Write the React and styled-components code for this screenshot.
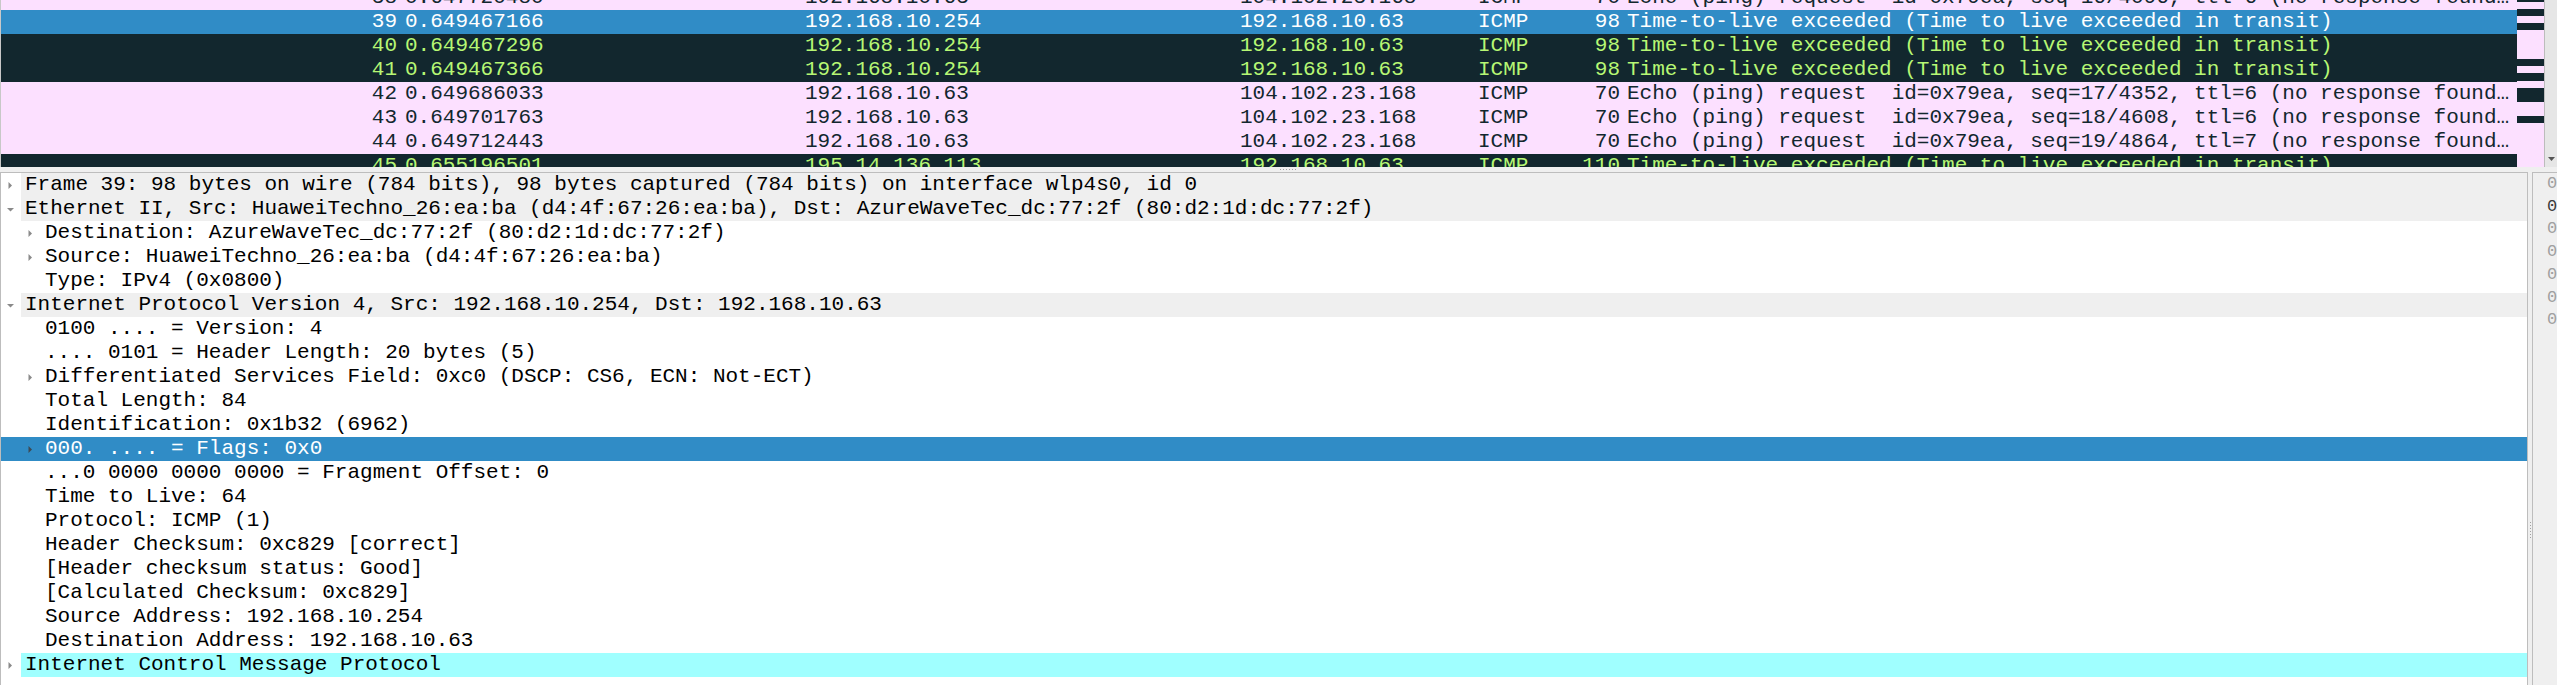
import React from "react";
import styled, { createGlobalStyle } from "styled-components";

const GlobalStyle = createGlobalStyle`
  html, body {
    margin: 0;
    padding: 0;
    background: #efefef;
  }
  body {
    overflow: hidden;
  }
  *, *:before, *:after {
    box-sizing: border-box;
  }
`;

const Window = styled.div`
  width: 2557px;
  height: 685px;
  display: flex;
  flex-direction: column;
  background: #efefef;
  font-family: "Liberation Mono", monospace;
  font-size: 21px;
  overflow: hidden;
`;

// ---- packet list ----

const PacketPane = styled.div`
  display: flex;
  height: 167px;
  flex-shrink: 0;
`;

const PacketList = styled.div`
  width: 2517px;
  flex-shrink: 0;
  overflow: hidden;
  border-left: 1px solid #c8c8c8;
`;

const PacketRows = styled.div`
  margin-top: -14px;
`;

const rowColors = {
  icmp: { bg: "#fce0ff", fg: "#12272e" },
  error: { bg: "#12272e", fg: "#b7f774" },
  selected: { bg: "#308cc6", fg: "#ffffff" }
};

const PacketRow = styled.div`
  display: flex;
  height: 24px;
  line-height: 24px;
  background: ${props => rowColors[props.$kind].bg};
  color: ${props => rowColors[props.$kind].fg};
`;

const Cell = styled.div`
  flex: 0 0 ${props => props.$w}px;
  padding: 0 4px;
  text-align: ${props => (props.$right ? "right" : "left")};
  white-space: pre;
  overflow: hidden;
`;

const InfoCell = styled.div`
  flex: 1;
  min-width: 0;
  padding: 0 4px 0 3px;
  white-space: pre;
  overflow: hidden;
  text-overflow: ellipsis;
`;

const Minimap = styled.svg`
  display: block;
  flex-shrink: 0;
  width: 28px;
  height: 167px;
  border-right: 1px solid #bcbcbc;
`;

const ScrollTrack = styled.div`
  flex: 1;
  background: #e6e6e6;
  display: flex;
  flex-direction: column;
  justify-content: flex-end;
  align-items: center;
  padding-bottom: 5px;
`;

const HSplitter = styled.div`
  height: 5px;
  flex-shrink: 0;
  display: flex;
  justify-content: center;
  align-items: center;
  padding-left: 20px;
`;

const HDots = styled.div`
  width: 17px;
  height: 1px;
  background: repeating-linear-gradient(to right, #a0a0a0 0 1px, transparent 1px 3px);
`;

// ---- lower panes ----

const Lower = styled.div`
  flex: 1;
  display: flex;
  min-height: 0;
`;

const Tree = styled.div`
  width: 2528px;
  flex-shrink: 0;
  background: #ffffff;
  border: 1px solid #bdbdbd;
  border-bottom: none;
  color: #000000;
  overflow: hidden;
`;

const TreeRow = styled.div`
  display: flex;
  height: 24px;
  line-height: 24px;
  background: ${props => (props.$selected ? "#308cc6" : "transparent")};
  color: ${props => (props.$selected ? "#ffffff" : "#000000")};
`;

const Branch = styled.div`
  flex-shrink: 0;
  display: flex;
  padding-left: ${props => props.$depth * 20}px;
`;

const BranchSlot = styled.div`
  width: 20px;
  padding-right: 2px;
  display: flex;
  align-items: center;
  justify-content: center;
`;

const itemTones = {
  top: "#efefef",
  icmp: "#a0ffff",
  none: "transparent"
};

const Item = styled.div`
  flex: 1;
  padding-left: 4px;
  white-space: pre;
  overflow: hidden;
  background: ${props => itemTones[props.$tone]};
`;

const VSplitter = styled.div`
  width: 4px;
  flex-shrink: 0;
  display: flex;
  justify-content: center;
  padding-top: 350px;
`;

const VDots = styled.div`
  width: 1px;
  height: 17px;
  background: repeating-linear-gradient(to bottom, #a0a0a0 0 1px, transparent 1px 3px);
`;

const Bytes = styled.div`
  flex: 1;
  min-width: 0;
  border-left: 1px solid #bdbdbd;
  border-top: 1px solid #bdbdbd;
  padding-left: 14px;
  font-size: 17px;
  line-height: 22.7px;
  overflow: hidden;
`;

const Offset = styled.div`
  white-space: pre;
  color: ${props => (props.$active ? "#3a3a3a" : "#a0a0a0")};
`;

// ---- data ----

const packets = [
  { no: 38, time: "0.647720480", src: "192.168.10.63", dst: "104.102.23.168", len: 70, kind: "icmp",
    info: "Echo (ping) request  id=0x79ea, seq=16/4096, ttl=6 (no response found!)" },
  { no: 39, time: "0.649467166", src: "192.168.10.254", dst: "192.168.10.63", len: 98, kind: "selected",
    info: "Time-to-live exceeded (Time to live exceeded in transit)" },
  { no: 40, time: "0.649467296", src: "192.168.10.254", dst: "192.168.10.63", len: 98, kind: "error",
    info: "Time-to-live exceeded (Time to live exceeded in transit)" },
  { no: 41, time: "0.649467366", src: "192.168.10.254", dst: "192.168.10.63", len: 98, kind: "error",
    info: "Time-to-live exceeded (Time to live exceeded in transit)" },
  { no: 42, time: "0.649686033", src: "192.168.10.63", dst: "104.102.23.168", len: 70, kind: "icmp",
    info: "Echo (ping) request  id=0x79ea, seq=17/4352, ttl=6 (no response found!)" },
  { no: 43, time: "0.649701763", src: "192.168.10.63", dst: "104.102.23.168", len: 70, kind: "icmp",
    info: "Echo (ping) request  id=0x79ea, seq=18/4608, ttl=6 (no response found!)" },
  { no: 44, time: "0.649712443", src: "192.168.10.63", dst: "104.102.23.168", len: 70, kind: "icmp",
    info: "Echo (ping) request  id=0x79ea, seq=19/4864, ttl=7 (no response found!)" },
  { no: 45, time: "0.655196501", src: "195.14.136.113", dst: "192.168.10.63", len: 110, kind: "error",
    info: "Time-to-live exceeded (Time to live exceeded in transit)" }
];

// minimap stripes for icmp error packets, y and height
const stripes = [
  [0, 2], [9, 7], [23, 7], [59, 7], [73, 8], [88, 14], [116, 7]
];

// depth, arrow (null | "closed" | "open"), tone, text
const tree = [
  [0, "closed", "top", "Frame 39: 98 bytes on wire (784 bits), 98 bytes captured (784 bits) on interface wlp4s0, id 0"],
  [0, "open", "top", "Ethernet II, Src: HuaweiTechno_26:ea:ba (d4:4f:67:26:ea:ba), Dst: AzureWaveTec_dc:77:2f (80:d2:1d:dc:77:2f)"],
  [1, "closed", "none", "Destination: AzureWaveTec_dc:77:2f (80:d2:1d:dc:77:2f)"],
  [1, "closed", "none", "Source: HuaweiTechno_26:ea:ba (d4:4f:67:26:ea:ba)"],
  [1, null, "none", "Type: IPv4 (0x0800)"],
  [0, "open", "top", "Internet Protocol Version 4, Src: 192.168.10.254, Dst: 192.168.10.63"],
  [1, null, "none", "0100 .... = Version: 4"],
  [1, null, "none", ".... 0101 = Header Length: 20 bytes (5)"],
  [1, "closed", "none", "Differentiated Services Field: 0xc0 (DSCP: CS6, ECN: Not-ECT)"],
  [1, null, "none", "Total Length: 84"],
  [1, null, "none", "Identification: 0x1b32 (6962)"],
  [1, "closed", "none", "000. .... = Flags: 0x0", true],
  [1, null, "none", "...0 0000 0000 0000 = Fragment Offset: 0"],
  [1, null, "none", "Time to Live: 64"],
  [1, null, "none", "Protocol: ICMP (1)"],
  [1, null, "none", "Header Checksum: 0xc829 [correct]"],
  [1, null, "none", "[Header checksum status: Good]"],
  [1, null, "none", "[Calculated Checksum: 0xc829]"],
  [1, null, "none", "Source Address: 192.168.10.254"],
  [1, null, "none", "Destination Address: 192.168.10.63"],
  [0, "closed", "icmp", "Internet Control Message Protocol"]
];

const offsets = ["0000", "0010", "0020", "0030", "0040", "0050", "0060"];

function Arrow({ state, color }) {
  if (!state) return null;
  return (
    <svg width="7" height="7" viewBox="0 0 7 7">
      {state === "open" ? (
        <polygon points="0,2 7,2 3.5,5.5" fill={color} />
      ) : (
        <polygon points="1.5,0 5,3.5 1.5,7" fill={color} />
      )}
    </svg>
  );
}

function PacketLine({ p }) {
  return (
    <PacketRow $kind={p.kind}>
      <Cell $w={400} $right>{p.no}</Cell>
      <Cell $w={400}>{p.time}</Cell>
      <Cell $w={435}>{p.src}</Cell>
      <Cell $w={238}>{p.dst}</Cell>
      <Cell $w={100}>ICMP</Cell>
      <Cell $w={50} $right>{p.len}</Cell>
      <InfoCell>{p.info}</InfoCell>
    </PacketRow>
  );
}

export default function App() {
  return (
    <Window>
      <GlobalStyle />
      <PacketPane>
        <PacketList>
          <PacketRows>
            {packets.map(p => (
              <PacketLine key={p.no} p={p} />
            ))}
          </PacketRows>
        </PacketList>
        <Minimap viewBox="0 0 27 167">
          <rect x="0" y="0" width="27" height="167" fill="#fce0ff" />
          {stripes.map(([y, h]) => (
            <rect key={y} x="0" y={y} width="27" height={h} fill="#12272e" />
          ))}
        </Minimap>
        <ScrollTrack>
          <svg width="7" height="5" viewBox="0 0 7 5">
            <polygon points="0,0 7,0 3.5,4" fill="#555" />
          </svg>
        </ScrollTrack>
      </PacketPane>
      <HSplitter>
        <HDots />
      </HSplitter>
      <Lower>
        <Tree>
          {tree.map(([depth, arrow, tone, text, selected], i) => (
            <TreeRow key={i} $selected={selected}>
              <Branch $depth={depth}>
                <BranchSlot>
                  <Arrow state={arrow} color={selected ? "#3d4a55" : "#8a8a8a"} />
                </BranchSlot>
              </Branch>
              <Item $tone={selected ? "none" : tone}>{text}</Item>
            </TreeRow>
          ))}
        </Tree>
        <VSplitter>
          <VDots />
        </VSplitter>
        <Bytes>
          {offsets.map((o, i) => (
            <Offset key={o} $active={i === 1}>{o}</Offset>
          ))}
        </Bytes>
      </Lower>
    </Window>
  );
}
